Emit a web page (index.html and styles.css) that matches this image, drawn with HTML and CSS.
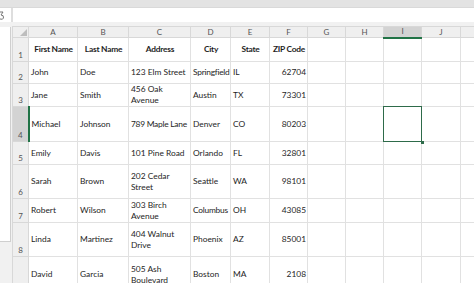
FILE: index.html
```html
<!DOCTYPE html>
<html lang="en">
<head>
    <meta charset="UTF-8">
    <meta name="viewport" content="width=device-width, initial-scale=1.0">
    <title>Contacts - Sheet1</title>
    <link rel="stylesheet" href="styles.css">
</head>
<body>
    <div class="topbar"></div>
    <div class="formula-bar">
        <div class="name-box">
            <svg width="11" height="14" viewBox="0 0 11 14"><path d="M0 4 L3 4 L1 7 Q4 7 3.5 10 Q3 12 0 11" fill="none" stroke="#777" stroke-width="1"/></svg>
        </div>
        <div class="divider"></div>
        <div class="formula-input"></div>
    </div>
    <div class="gap"></div>

    <div class="sheet">
        <div class="side">
            <div class="side-panel"></div>
        </div>
        <div class="grid-wrap">
            <table class="grid">
                <colgroup>
                    <col class="c-rh">
                    <col class="c-a">
                    <col class="c-b">
                    <col class="c-c">
                    <col class="c-d">
                    <col class="c-e">
                    <col class="c-f">
                    <col class="c-g">
                    <col class="c-g">
                    <col class="c-g">
                    <col class="c-j">
                    <col class="c-k">
                </colgroup>
                <tr class="r-head">
                    <th class="corner"><span class="tri"></span></th>
                    <th class="col">A</th>
                    <th class="col">B</th>
                    <th class="col">C</th>
                    <th class="col">D</th>
                    <th class="col">E</th>
                    <th class="col">F</th>
                    <th class="col">G</th>
                    <th class="col">H</th>
                    <th class="col active">I</th>
                    <th class="col">J</th>
                    <th class="col"></th>
                </tr>
                <tr class="h24">
                    <th class="row">1</th>
                    <td class="title">First Name</td>
                    <td class="title">Last Name</td>
                    <td class="title">Address</td>
                    <td class="title">City</td>
                    <td class="title">State</td>
                    <td class="title">ZIP Code</td>
                    <td></td><td></td><td></td><td></td><td></td>
                </tr>
                <tr class="h22">
                    <th class="row">2</th>
                    <td>John</td>
                    <td>Doe</td>
                    <td>123 Elm Street</td>
                    <td class="tight">Springfield</td>
                    <td>IL</td>
                    <td class="num">62704</td>
                    <td></td><td></td><td></td><td></td><td></td>
                </tr>
                <tr class="h23">
                    <th class="row">3</th>
                    <td>Jane</td>
                    <td>Smith</td>
                    <td class="wrap">456 Oak<br>Avenue</td>
                    <td>Austin</td>
                    <td>TX</td>
                    <td class="num">73301</td>
                    <td></td><td></td><td></td><td></td><td></td>
                </tr>
                <tr class="h35">
                    <th class="row active">4</th>
                    <td>Michael</td>
                    <td>Johnson</td>
                    <td class="tight">789 Maple Lane</td>
                    <td>Denver</td>
                    <td>CO</td>
                    <td class="num">80203</td>
                    <td></td><td></td>
                    <td class="selected"><span class="handle"></span></td>
                    <td></td><td></td>
                </tr>
                <tr class="h23">
                    <th class="row">5</th>
                    <td>Emily</td>
                    <td>Davis</td>
                    <td>101 Pine Road</td>
                    <td>Orlando</td>
                    <td>FL</td>
                    <td class="num">32801</td>
                    <td></td><td></td><td></td><td></td><td></td>
                </tr>
                <tr class="h34">
                    <th class="row">6</th>
                    <td>Sarah</td>
                    <td>Brown</td>
                    <td class="wrap">202 Cedar<br>Street</td>
                    <td>Seattle</td>
                    <td>WA</td>
                    <td class="num">98101</td>
                    <td></td><td></td><td></td><td></td><td></td>
                </tr>
                <tr class="h24">
                    <th class="row">7</th>
                    <td>Robert</td>
                    <td>Wilson</td>
                    <td class="wrap">303 Birch<br>Avenue</td>
                    <td class="tight">Columbus</td>
                    <td>OH</td>
                    <td class="num">43085</td>
                    <td></td><td></td><td></td><td></td><td></td>
                </tr>
                <tr class="h34">
                    <th class="row">8</th>
                    <td>Linda</td>
                    <td>Martinez</td>
                    <td class="wrap">404 Walnut<br>Drive</td>
                    <td>Phoenix</td>
                    <td>AZ</td>
                    <td class="num">85001</td>
                    <td></td><td></td><td></td><td></td><td></td>
                </tr>
                <tr class="h36">
                    <th class="row">9</th>
                    <td>David</td>
                    <td>Garcia</td>
                    <td class="wrap">505 Ash<br>Boulevard</td>
                    <td>Boston</td>
                    <td>MA</td>
                    <td class="num">2108</td>
                    <td></td><td></td><td></td><td></td><td></td>
                </tr>
            </table>
        </div>
    </div>
</body>
</html>
```

FILE: styles.css
```css
body {
    margin: 0;
    width: 474px;
    height: 283px;
    overflow: hidden;
    background-color: #f1f1f1;
    font-family: Lato, "Liberation Sans", sans-serif;
}
.topbar {
    height: 7px;
    background-color: #e3e3e3;
}
.formula-bar {
    display: flex;
    height: 14px;
    background-color: #fff;
    border-top: 1px solid #d9d9d9;
}
.name-box {
    width: 11px;
    overflow: hidden;
}
.name-box svg {
    display: block;
}
.divider {
    width: 2px;
    background-color: #dedede;
}
.formula-input {
    flex: 1;
    background-color: #fff;
}
.gap {
    height: 4px;
    background-color: #f1f1f1;
}
.sheet {
    display: flex;
}
.side {
    width: 12px;
    flex: none;
    padding-top: 1px;
}
.side-panel {
    width: 10px;
    height: 214px;
    background-color: #fff;
    border-right: 1px solid #cfcfcf;
    border-bottom: 1px solid #cfcfcf;
}
.grid-wrap {
    flex: 1;
    overflow: hidden;
}
.grid {
    border-collapse: collapse;
    table-layout: fixed;
    width: 476px;
    background-color: #fff;
}
.c-rh { width: 16px; }
.c-a { width: 49px; }
.c-b { width: 51px; }
.c-c { width: 62px; }
.c-d { width: 40px; }
.c-e { width: 39px; }
.c-f { width: 38px; }
.c-g { width: 38px; }
.c-j { width: 39px; }
.c-k { width: 28px; }

.grid td, .grid th {
    border: 1px solid #e1e1e1;
    padding: 0 1px 0 2px;
    font-size: 8.4px;
    line-height: 11px;
    color: #1e1e1e;
    white-space: nowrap;
    text-align: left;
}
.grid td.tight {
    letter-spacing: -0.25px;
}
.grid th.col, .grid th.corner, .grid th.row {
    background-color: #efefef;
    border-color: #d8d8d8;
    font-weight: normal;
    color: #555;
    font-size: 8px;
    overflow: hidden;
}
.grid th.col {
    text-align: center;
    vertical-align: middle;
    line-height: 9px;
    padding: 0;
}
.grid th.row {
    text-align: center;
    vertical-align: bottom;
    padding: 0 0 1px;
    line-height: 10px;
}
.grid th.corner {
    position: relative;
}
.tri {
    position: absolute;
    right: 1px;
    bottom: 1px;
    width: 0;
    height: 0;
    border-left: 7px solid transparent;
    border-bottom: 7px solid #bdbdbd;
}
.grid th.col.active {
    background-color: #d3d3d3;
    border-bottom: 2px solid #217346;
}
.grid th.row.active {
    background-color: #d3d3d3;
    border-right: 2px solid #217346;
}
.r-head { height: 11px; }
.h22 { height: 22px; }
.h23 { height: 23px; }
.h24 { height: 24px; }
.h34 { height: 34px; }
.h35 { height: 35px; }
.h36 { height: 36px; }

.grid td.title {
    font-weight: bold;
    text-align: center;
    letter-spacing: -0.25px;
}
.grid td.num {
    text-align: right;
}
.grid td.wrap {
    line-height: 11px;
}
.grid td.selected {
    position: relative;
}
.grid td.selected::after {
    content: "";
    position: absolute;
    left: -1px;
    top: -1px;
    right: -1px;
    bottom: -1px;
    border: 1px solid #2e6b4a;
}
.handle {
    position: absolute;
    right: -3px;
    bottom: -3px;
    width: 3px;
    height: 3px;
    background-color: #2e6b4a;
    z-index: 1;
}
```
